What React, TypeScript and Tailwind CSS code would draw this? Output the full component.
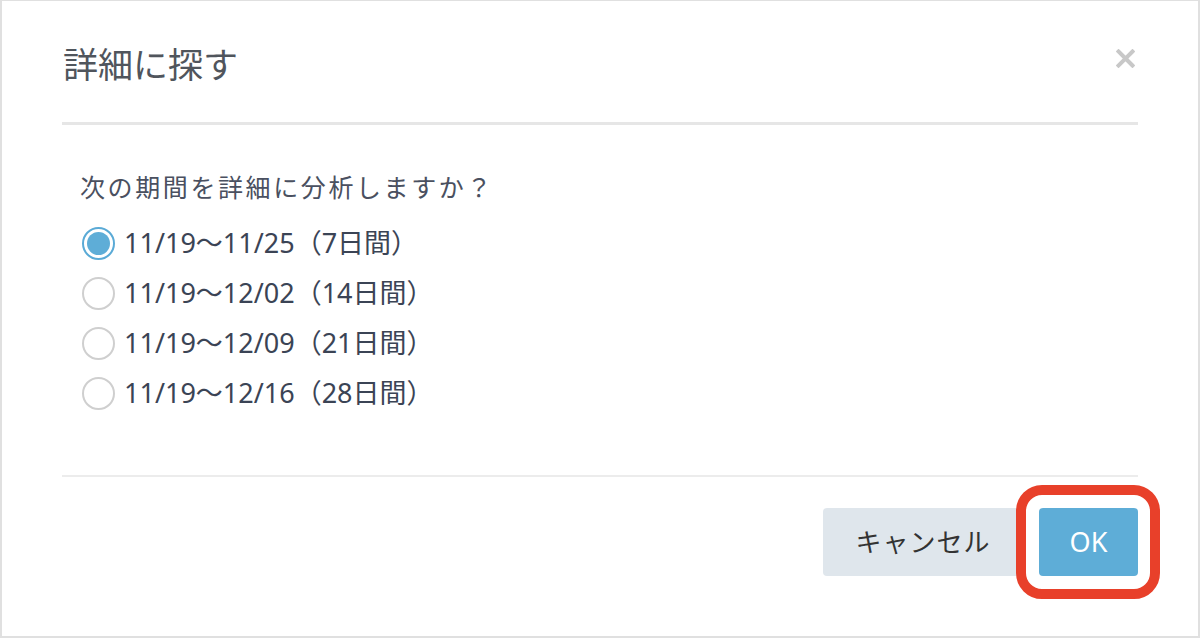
import { useState } from 'react'

const options = [
  '11/19〜11/25（7日間）',
  '11/19〜12/02（14日間）',
  '11/19〜12/09（21日間）',
  '11/19〜12/16（28日間）',
]

export default function App() {
  const [selected, setSelected] = useState(0)

  return (
    <div
      className="relative w-[1200px] h-[638px] bg-white border-t border-b-2 border-l-2 border-r-2 border-[#e0e0e0] px-[60px]"
      style={{ fontFamily: '"Noto Sans", "Noto Sans CJK JP", sans-serif' }}
    >
      {/* header */}
      <div className="h-[121px] flex justify-between">
        <h1 className="mt-[42px] text-[35px] leading-[44px] text-[#50555c] pl-px">詳細に探す</h1>
        <button className="mt-[48px] self-start mr-[3px] text-[#c8c8c8]" aria-label="close">
          <svg width="19" height="19" viewBox="0 0 19 19">
            <path d="M2.5 2.5 L16.5 16.5 M16.5 2.5 L2.5 16.5" stroke="currentColor" strokeWidth="4" strokeLinecap="square" />
          </svg>
        </button>
      </div>
      <div className="h-[3px] bg-[#e6e6e6]" />

      {/* body */}
      <div className="pt-[44px] pl-[18px]">
        <p className="text-[25px] leading-[36px] tracking-[2.6px] text-[#4a5060]">次の期間を詳細に分析しますか？</p>
        <div className="mt-[13px]">
          {options.map((label, i) => (
            <label
              key={label}
              className="h-[50px] flex items-center gap-[9px] pl-[2px] cursor-pointer"
              onClick={() => setSelected(i)}
            >
              {selected === i ? (
                <span className="w-[33px] h-[33px] rounded-full border-[2.5px] border-[#5aaad6] flex items-center justify-center">
                  <span className="w-[23px] h-[23px] rounded-full bg-[#5eadd7]" />
                </span>
              ) : (
                <span className="w-[33px] h-[33px] rounded-full border-2 border-[#cfcfcf]" />
              )}
              <span className="text-[27px] leading-[36px] text-[#3b4455]">{label}</span>
            </label>
          ))}
        </div>
      </div>

      {/* footer */}
      <div className="mt-[57px] h-[2px] bg-[#ececec]" />
      <div className="mt-[31px] flex justify-end gap-[16px]">
        <button className="w-[200px] h-[68px] rounded-[4px] bg-[#dfe6ec] text-[26px] text-[#333] tracking-[1px]">
          キャンセル
        </button>
        <button className="w-[99px] h-[68px] rounded-[4px] bg-[#5eadd7] text-[27px] text-white">
          OK
        </button>
      </div>

      {/* highlight */}
      <div className="absolute left-[1014px] top-[484px] w-[144px] h-[114px] rounded-[26px] border-[10px] border-[#e8402a] pointer-events-none" />
    </div>
  )
}
